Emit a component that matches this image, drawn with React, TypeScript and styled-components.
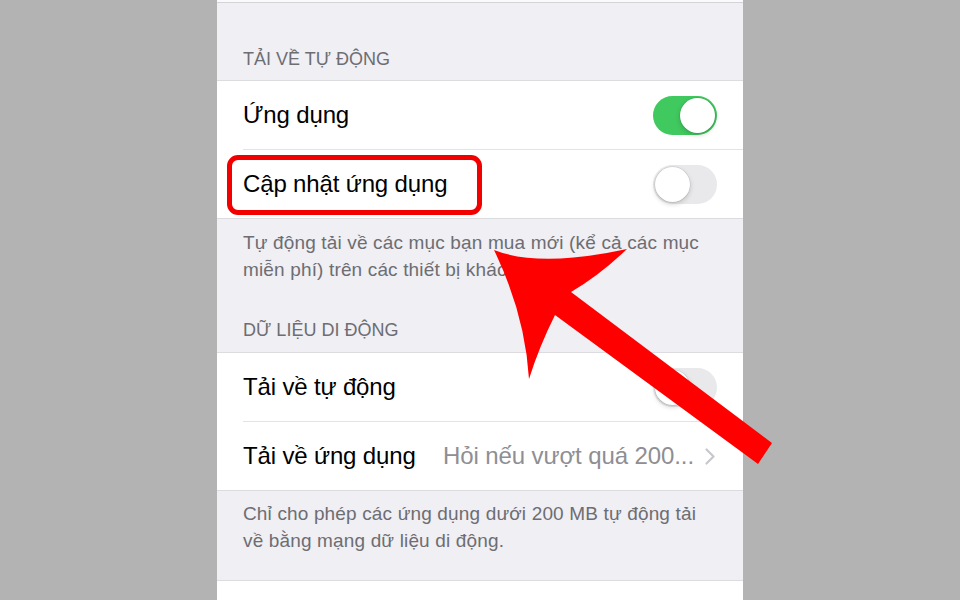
import React from "react";
import styled, { createGlobalStyle } from "styled-components";

const Global = createGlobalStyle`
  html, body {
    margin: 0;
    padding: 0;
    background: #b3b3b3;
  }
  body {
    font-family: "Liberation Sans", Arial, sans-serif;
  }
`;

const Page = styled.div`
  position: relative;
  width: 960px;
  height: 600px;
  overflow: hidden;
  display: flex;
  justify-content: center;
`;

const Screen = styled.div`
  width: 526px;
  height: 100%;
  background: #efeff4;
  display: flex;
  flex-direction: column;
`;

const TopCell = styled.div`
  flex-shrink: 0;
  height: 2px;
  background: #fafafa;
  border-bottom: 1px solid #d4d4d8;
`;

const BottomCell = styled.div`
  flex: 1;
  background: #ffffff;
  border-top: 1px solid #dcdce0;
`;

const SectionHeader = styled.div<{ $top: number; $bottom: number }>`
  flex-shrink: 0;
  padding: ${(p) => p.$top}px 26px ${(p) => p.$bottom}px;
  font-size: 18px;
  line-height: 22px;
  color: #6d6d72;
  text-transform: uppercase;
  white-space: nowrap;
`;

const Group = styled.div`
  flex-shrink: 0;
  background: #ffffff;
  border-top: 1px solid #dcdce0;
  border-bottom: 1px solid #dcdce0;
`;

const Row = styled.div`
  position: relative;
  height: 68px;
  padding: 0 26px;
  display: flex;
  align-items: center;
  justify-content: space-between;
`;

const Divider = styled.div`
  margin-left: 26px;
  height: 1px;
  background: #e3e3e7;
`;

const Label = styled.span`
  font-size: 24px;
  letter-spacing: -0.15px;
  color: #000000;
  white-space: nowrap;
`;

const Detail = styled.span`
  display: flex;
  align-items: center;
  gap: 11px;
  margin-right: 2px;
  font-size: 24px;
  letter-spacing: -0.1px;
  color: #8e8e93;
  white-space: nowrap;
`;

const Track = styled.div<{ $on: boolean }>`
  box-sizing: border-box;
  width: 64px;
  height: 39px;
  padding: 2px;
  border-radius: 20px;
  background: ${(p) => (p.$on ? "#3fc95f" : "#e9e9eb")};
  display: flex;
  justify-content: ${(p) => (p.$on ? "flex-end" : "flex-start")};
  align-items: center;
`;

const Knob = styled.div`
  width: 35px;
  height: 35px;
  border-radius: 50%;
  background: #ffffff;
  box-shadow: 0 2px 5px rgba(0, 0, 0, 0.18), 0 0 0 0.5px rgba(0, 0, 0, 0.12);
`;

const Footer = styled.div<{ $top: number; $bottom: number }>`
  flex-shrink: 0;
  padding: ${(p) => p.$top}px 26px ${(p) => p.$bottom}px;
  font-size: 19px;
  line-height: 27px;
  letter-spacing: 0.15px;
  color: #6d6d72;
  white-space: nowrap;
`;

const Highlight = styled.div`
  position: absolute;
  left: 10px;
  top: 5px;
  width: 255px;
  height: 60px;
  box-sizing: border-box;
  border: 5px solid #f20000;
  border-radius: 11px;
  pointer-events: none;
`;

const ArrowLayer = styled.svg`
  position: absolute;
  left: 0;
  top: 0;
  pointer-events: none;
`;

const Switch = ({ on }: { on: boolean }) => (
  <Track $on={on}>
    <Knob />
  </Track>
);

const Chevron = () => (
  <svg width="10" height="17" viewBox="0 0 10 17">
    <polyline
      points="1.5,1.5 8.5,8.5 1.5,15.5"
      fill="none"
      stroke="#c7c7cc"
      strokeWidth="2.2"
      strokeLinecap="round"
      strokeLinejoin="round"
    />
  </svg>
);

export default function App() {
  return (
    <>
      <Global />
      <Page>
        <Screen>
          <TopCell />

          <SectionHeader $top={45} $bottom={10}>Tải về tự động</SectionHeader>
          <Group>
            <Row>
              <Label>Ứng dụng</Label>
              <Switch on />
            </Row>
            <Divider />
            <Row>
              <Label>Cập nhật ứng dụng</Label>
              <Switch on={false} />
              <Highlight />
            </Row>
          </Group>
          <Footer $top={10} $bottom={0}>
            Tự động tải về các mục bạn mua mới (kể cả các mục
            <br />
            miễn phí) trên các thiết bị khác.
          </Footer>

          <SectionHeader $top={36} $bottom={11}>Dữ liệu di động</SectionHeader>
          <Group>
            <Row>
              <Label>Tải về tự động</Label>
              <Switch on={false} />
            </Row>
            <Divider />
            <Row>
              <Label>Tải về ứng dụng</Label>
              <Detail>
                Hỏi nếu vượt quá 200...
                <Chevron />
              </Detail>
            </Row>
          </Group>
          <Footer $top={9} $bottom={26}>
            Chỉ cho phép các ứng dụng dưới 200 MB tự động tải
            <br />
            về bằng mạng dữ liệu di động.
          </Footer>

          <BottomCell />
        </Screen>

        <ArrowLayer width="960" height="600" viewBox="0 0 960 600">
          <path
            d="M494 250 Q540 268 627 249 Q600 275 571 292 L772 443 L758 464 L555 315 Q539 347 529 379 Q525 314 494 250 Z"
            fill="#ff0000"
          />
        </ArrowLayer>
      </Page>
    </>
  );
}
